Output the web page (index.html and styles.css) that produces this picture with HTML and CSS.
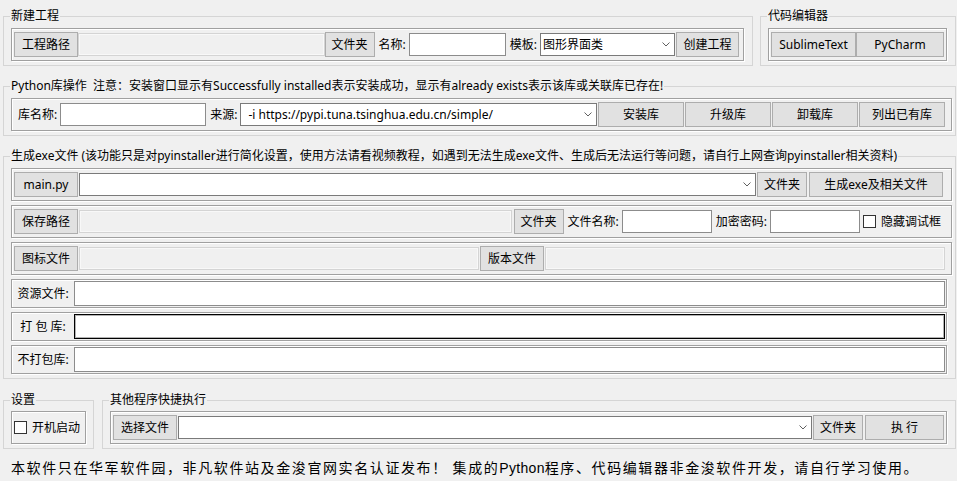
FILE: index.html
```html
<!DOCTYPE html>
<html lang="zh-CN">
<head>
    <meta charset="UTF-8">
    <meta name="viewport" content="width=device-width, initial-scale=1.0">
    <title>Python 工具箱</title>
    <link rel="stylesheet" href="styles.css">
</head>
<body>
    <!-- Top row: new project + editors -->
    <div class="top-row">
        <fieldset class="group group-project">
            <legend>新建工程</legend>
            <div class="bar bar-project">
                <button class="btn btn-side">工程路径</button>
                <div class="ro"></div>
                <button class="btn btn-folder">文件夹</button>
                <span class="lbl">名称:</span>
                <input class="entry entry-name" type="text">
                <span class="lbl">模板:</span>
                <div class="combo combo-tpl">
                    <span class="combo-text">图形界面类</span>
                    <svg class="chev" width="8" height="5" viewBox="0 0 8 5"><polyline points="0.5,0.5 4,4 7.5,0.5"/></svg>
                </div>
                <button class="btn btn-create">创建工程</button>
            </div>
        </fieldset>

        <fieldset class="group group-editor">
            <legend>代码编辑器</legend>
            <div class="bar">
                <button class="btn btn-sublime">SublimeText</button>
                <button class="btn btn-pycharm">PyCharm</button>
            </div>
        </fieldset>
    </div>

    <!-- Python library operations -->
    <fieldset class="group group-wide">
        <legend>Python库操作&nbsp;&nbsp;注意：安装窗口显示有Successfully installed表示安装成功，显示有already exists表示该库或关联库已存在!</legend>
        <div class="bar bar-lib">
            <span class="lbl">库名称:</span>
            <input class="entry entry-lib" type="text">
            <span class="lbl">来源:</span>
            <div class="combo combo-src">
                <span class="combo-text">-i https://pypi.tuna.tsinghua.edu.cn/simple/</span>
                <svg class="chev" width="8" height="5" viewBox="0 0 8 5"><polyline points="0.5,0.5 4,4 7.5,0.5"/></svg>
            </div>
            <button class="btn btn-lib">安装库</button>
            <button class="btn btn-lib">升级库</button>
            <button class="btn btn-lib">卸载库</button>
            <button class="btn btn-lib">列出已有库</button>
        </div>
    </fieldset>

    <!-- Build exe -->
    <fieldset class="group group-wide">
        <legend>生成exe文件 (该功能只是对pyinstaller进行简化设置，使用方法请看视频教程，如遇到无法生成exe文件、生成后无法运行等问题，请自行上网查询pyinstaller相关资料)</legend>
        <div class="bar bar-main">
            <button class="btn btn-side">main.py</button>
            <div class="combo combo-fill">
                <span class="combo-text"></span>
                <svg class="chev" width="8" height="5" viewBox="0 0 8 5"><polyline points="0.5,0.5 4,4 7.5,0.5"/></svg>
            </div>
            <button class="btn btn-folder btn-gap">文件夹</button>
            <button class="btn btn-gen">生成exe及相关文件</button>
        </div>
        <div class="bar bar-save">
            <button class="btn btn-side">保存路径</button>
            <div class="ro ro-gap"></div>
            <button class="btn btn-folder btn-gap2">文件夹</button>
            <span class="lbl">文件名称:</span>
            <input class="entry entry-small" type="text">
            <span class="lbl">加密密码:</span>
            <input class="entry entry-small" type="text">
            <label class="check-label"><span class="check"></span>隐藏调试框</label>
        </div>
        <div class="bar bar-icon">
            <button class="btn btn-side">图标文件</button>
            <div class="ro ro-gap"></div>
            <button class="btn btn-side btn-gap">版本文件</button>
            <div class="ro ro-gap"></div>
        </div>
        <div class="bar bar-short">
            <span class="lbl lbl-row">资源文件:</span>
            <input class="entry entry-row" type="text">
        </div>
        <div class="bar bar-short">
            <span class="lbl lbl-row">打 包 库:</span>
            <input class="entry entry-row entry-focus" type="text">
        </div>
        <div class="bar bar-short">
            <span class="lbl lbl-row">不打包库:</span>
            <input class="entry entry-row" type="text">
        </div>
    </fieldset>

    <!-- Bottom row: settings + quick run -->
    <div class="bottom-row">
        <fieldset class="group group-settings">
            <legend>设置</legend>
            <div class="bar bar-low">
                <label class="check-label check-boot"><span class="check"></span>开机启动</label>
            </div>
        </fieldset>

        <fieldset class="group group-run">
            <legend>其他程序快捷执行</legend>
            <div class="bar bar-low">
                <button class="btn btn-side">选择文件</button>
                <div class="combo combo-fill">
                    <span class="combo-text"></span>
                    <svg class="chev" width="8" height="5" viewBox="0 0 8 5"><polyline points="0.5,0.5 4,4 7.5,0.5"/></svg>
                </div>
                <button class="btn btn-folder btn-gap">文件夹</button>
                <button class="btn btn-run">执 行</button>
            </div>
        </fieldset>
    </div>

    <p class="notice">本软件只在华军软件园，非凡软件站及金浚官网实名认证发布！ 集成的<span class="latin">Python</span>程序、代码编辑器非金浚软件开发，请自行学习使用。</p>
</body>
</html>
```

FILE: styles.css
```css
* {
    box-sizing: border-box;
}

body {
    margin: 0;
    width: 957px;
    height: 481px;
    overflow: hidden;
    background-color: #f0f0f0;
    color: #000;
    font-family: "Noto Sans", "Noto Sans CJK SC", sans-serif;
    font-size: 12px;
    line-height: 16px;
}

/* Group frames (LabelFrame) */
.group {
    margin: 0;
    min-width: 0;
    padding: 0 8px 4px 7px;
    border: 1px solid #d5d5d5;
}

.group legend {
    margin-left: -1px;
    padding: 0 1px;
    line-height: 16px;
    white-space: nowrap;
}

.top-row {
    display: flex;
    margin: 8px 0 0 3px;
}

.group-project {
    width: 750px;
}

.group-editor {
    width: 196px;
    margin-left: 7px;
}

.group-wide {
    width: 953px;
    margin: 12px 0 0 3px;
    padding-right: 3px;
}

.bottom-row {
    display: flex;
    margin: 13px 0 0 3px;
}

.group-settings {
    width: 91px;
    padding-right: 7px;
}

.group-run {
    width: 854px;
    margin-left: 8px;
}

/* Inner bars */
.bar {
    display: flex;
    align-items: center;
    height: 33px;
    margin-top: 4px;
    padding: 0 2px;
    border: 1px solid #a0a0a0;
    box-shadow: inset 1px 1px 0 #fff, 1px 1px 0 #fff;
}

.bar-low {
    margin-top: 3px;
}

.bar-project {
    padding-right: 4px;
}

.bar-lib {
    padding-right: 6px;
}

.bar-main {
    padding-right: 8px;
}

.bar-save {
    padding-right: 10px;
}

.bar-icon {
    padding-right: 6px;
}

.bar-short {
    height: 29px;
    margin-right: 5px;
    padding: 0 1px 0 0;
}

/* Widgets */
.btn {
    flex: none;
    height: 25px;
    padding: 0;
    border: 1px solid #adadad;
    background-color: #e1e1e1;
    color: #000;
    font: inherit;
    line-height: 16px;
    white-space: nowrap;
}

.btn-side {
    width: 64px;
}

.btn-folder {
    width: 50px;
}

.btn-gap {
    margin-left: 1px;
}

.btn-gap2 {
    margin-left: 2px;
}

.btn-create {
    width: 63px;
    margin-left: 1px;
}

.btn-sublime {
    width: 85px;
}

.btn-pycharm {
    flex: 1;
}

.btn-lib {
    width: 86px;
    margin-left: 1px;
}

.btn-gen {
    width: 134px;
    margin-left: 2px;
}

.btn-run {
    width: 79px;
    margin-left: 2px;
}

.lbl {
    flex: none;
    padding: 0 3px 0 4px;
    white-space: pre;
}

.lbl-row {
    width: 62px;
    padding: 0;
    text-align: center;
}

.entry {
    flex: none;
    height: 23px;
    margin: 0;
    padding: 0 3px;
    border: 1px solid #8c8c8c;
    background-color: #fff;
    font: inherit;
    outline: none;
}

.entry-name {
    width: 97px;
}

.entry-lib {
    width: 146px;
}

.entry-small {
    width: 90px;
}

.entry-row {
    flex: 1;
    height: 25px;
}

.entry-focus {
    border-color: #000;
    box-shadow: inset 0 0 0 1px rgba(0, 0, 0, 0.3);
}

.ro {
    flex: 1;
    height: 23px;
    border: 1px solid #d4d4d4;
    background-color: #f0f0f0;
    box-shadow: inset 0 0 0 1px #f8f8f8;
}

.ro-gap {
    margin-left: 1px;
}

.combo {
    display: flex;
    align-items: center;
    height: 23px;
    padding: 0 4px 0 2px;
    border: 1px solid #7a7a7a;
    background-color: #fff;
    white-space: nowrap;
}

.combo-text {
    flex: 1;
    overflow: hidden;
}

.combo-tpl {
    width: 135px;
}

.combo-src {
    flex: 1;
    padding-left: 7px;
}

.combo-fill {
    flex: 1;
    margin-left: 1px;
}

.chev {
    flex: none;
}

.chev polyline {
    fill: none;
    stroke: #606060;
    stroke-width: 1;
}

.check-label {
    display: flex;
    align-items: center;
    gap: 5px;
    margin-left: 3px;
    white-space: nowrap;
}

.check-boot {
    margin-left: 0;
}

.check {
    flex: none;
    width: 13px;
    height: 13px;
    border: 1px solid #333;
    background-color: #fff;
}

/* Footer notice */
.notice {
    margin: 8px 0 0 11px;
    font-family: "Noto Sans CJK SC", sans-serif;
    font-size: 14px;
    line-height: 20px;
    letter-spacing: 1.6px;
    white-space: nowrap;
}

.notice .latin {
    font-family: "Liberation Sans", sans-serif;
    letter-spacing: 0.3px;
}
```
